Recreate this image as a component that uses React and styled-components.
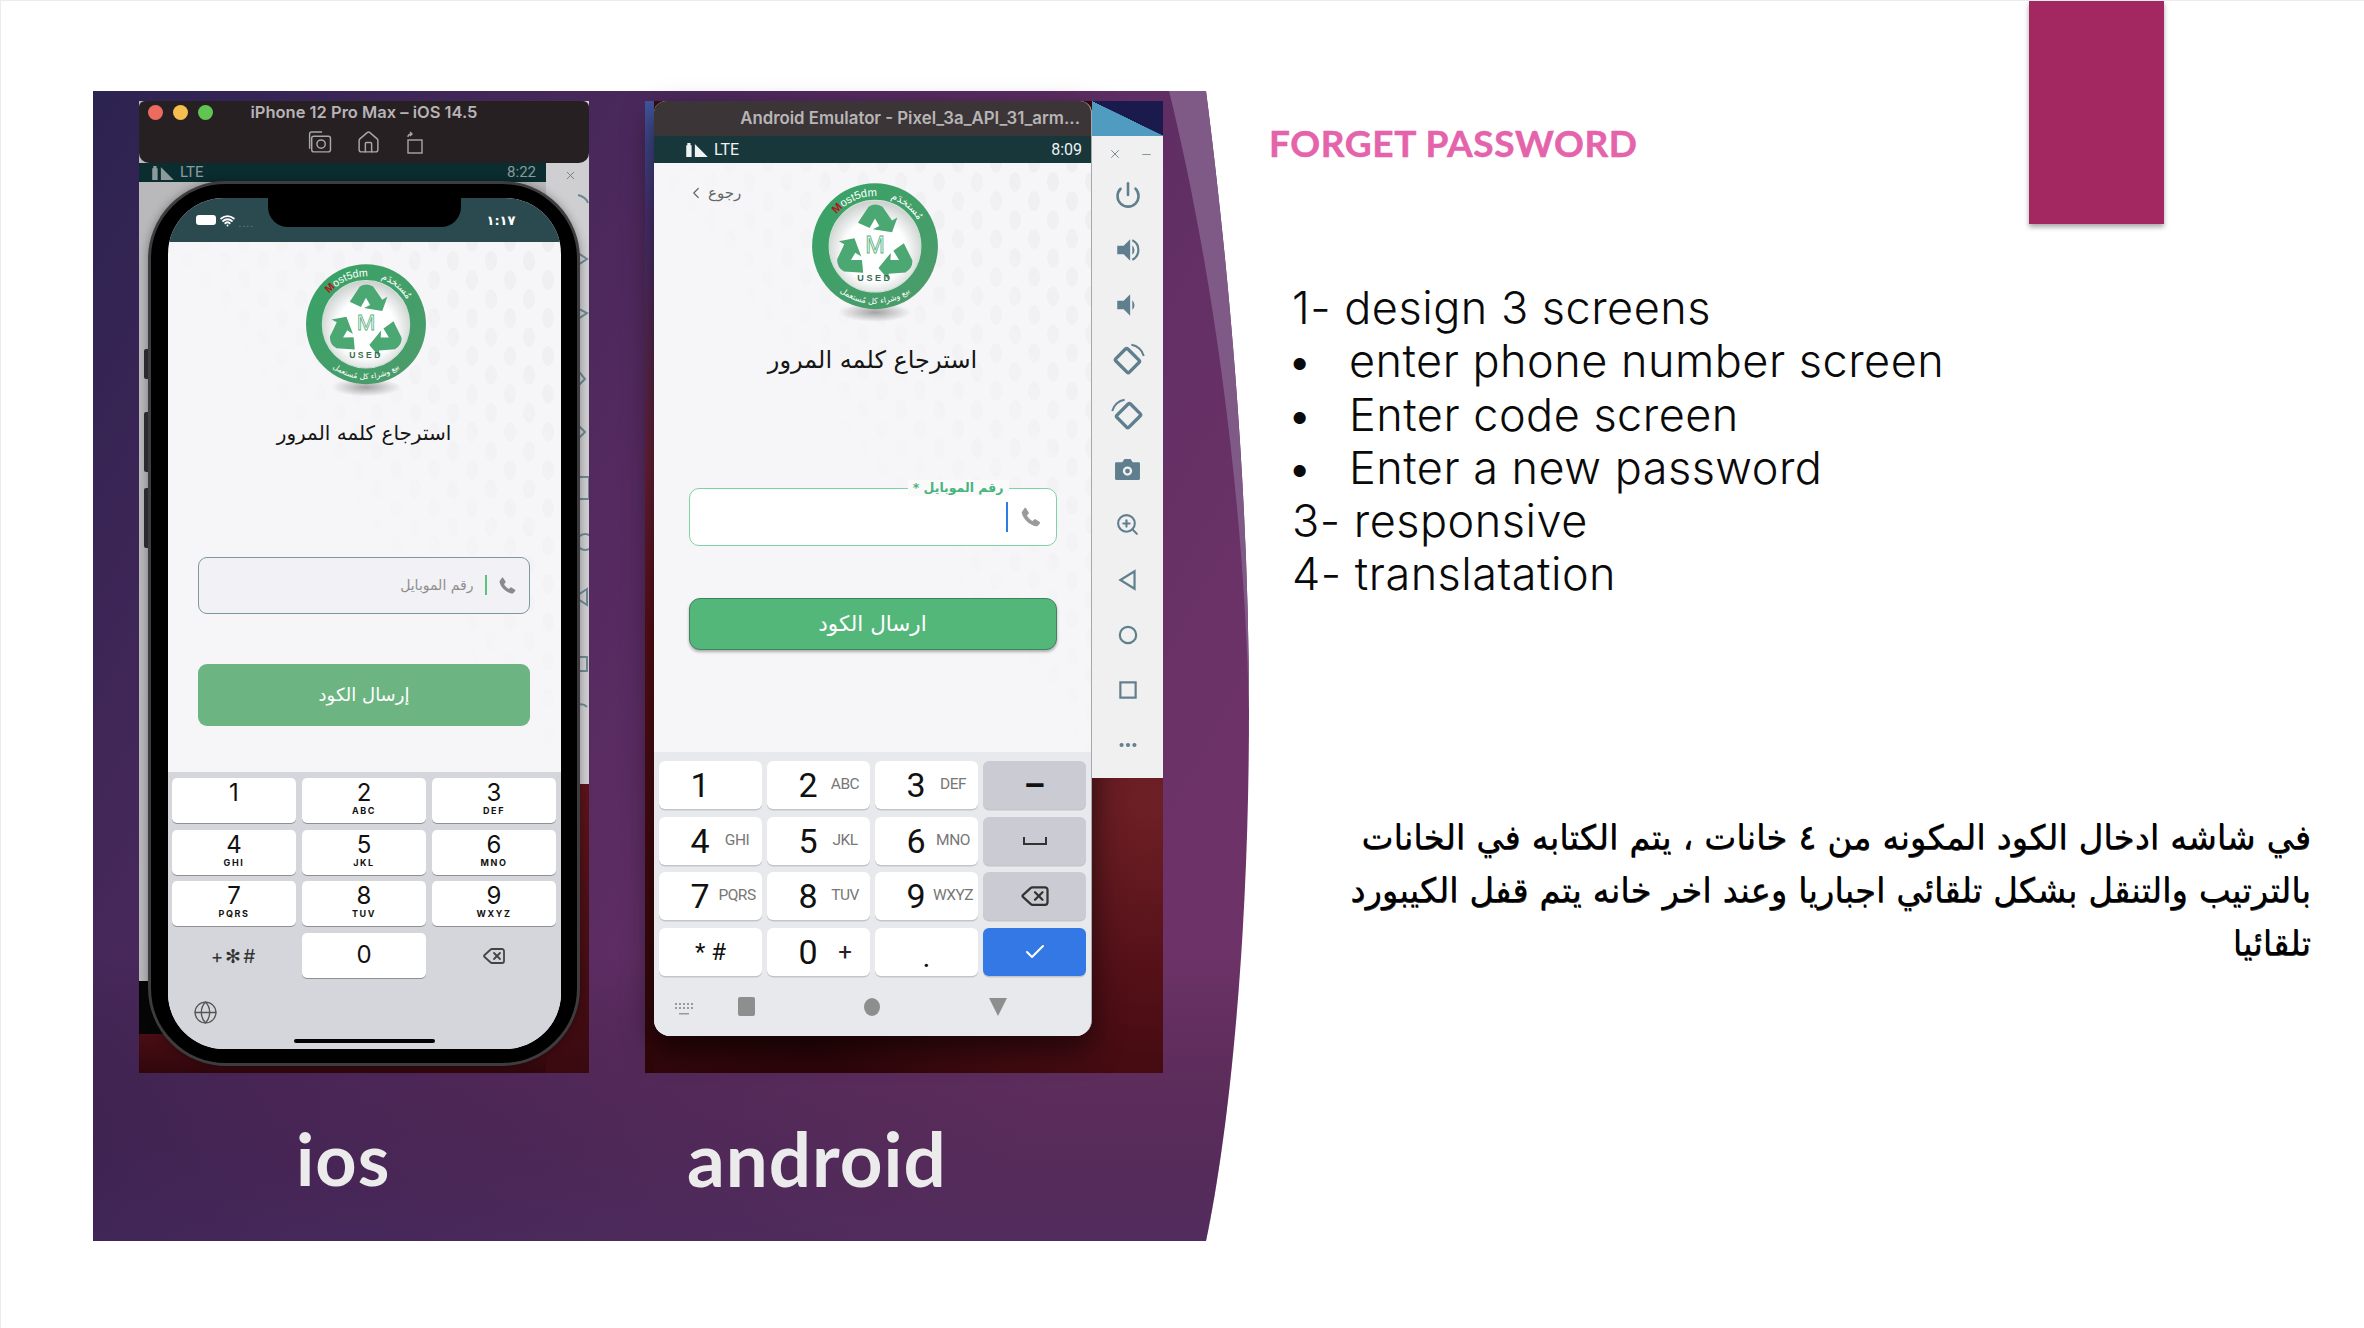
import React from "react";
import styled, { createGlobalStyle } from "styled-components";
import { Power, ZoomIn, ChevronLeft, Check, Delete, Globe, X, Minus, MoreHorizontal, Home, Wifi } from "lucide-react";

const Global = createGlobalStyle`
  html, body { margin: 0; padding: 0; background: #fff; }
  * { box-sizing: border-box; }
`;
const AR = `"DejaVu Sans", "Noto Sans", sans-serif`;

const Slide = styled.div`
  width: 2364px; height: 1328px; background: #fff; overflow: hidden;
  display: grid; grid-template-columns: 1269px 1fr;
  border-top: 1px solid #ececec; border-left: 1px solid #ececec;
  font-family: "Lato", sans-serif;
`;
const Panel = styled.section`
  position: relative; margin: 90px 0 0 92px; height: 1150px; width: 1113px;
`;
const PanelArt = styled.svg`
  position: absolute; left: 0; top: 0; width: 1165px; height: 1150px; overflow: visible;
`;
const Windows = styled.div`
  position: relative; display: flex; gap: 56px; padding: 10px 0 0 46px;
`;
const Captions = styled.div`
  position: relative; display: flex; padding-top: 38px;
`;
const Caption = styled.div`
  font: 700 ${p => p.$size}px/94px "Lato", sans-serif; color: #ecebec; width: ${p => p.$w}px; padding-left: ${p => p.$pad}px;
  letter-spacing: 1px;
`;

/* iOS simulator */
const IosWindow = styled.div`
  position: relative; width: 450px; height: 972px; display: flex; flex-direction: column;
  background:
    linear-gradient(to bottom, #cfcfd1 0 683px, #5a141a 683px, #3a0a10 100%) right top / 43px 100% no-repeat,
    linear-gradient(to bottom, #b9b9bb 0 880px, #060606 880px 933px, #4a0d14 933px, #30070c 100%) left top / 407px 100% no-repeat;
`;
const SimBar = styled.header`
  height: 62px; background: #262023; border-radius: 6px 6px 10px 10px; color: #b7b3b5;
  display: flex; flex-direction: column; align-items: center; position: relative; z-index: 1;
`;
const TrafficLights = styled.div`
  position: absolute; left: 9px; top: 4px; display: flex; gap: 10px;
`;
const Light = styled.i`
  width: 15px; height: 15px; border-radius: 50%; background: ${p => p.$c}; display: block;
`;
const SimTitle = styled.div`
  font: 600 16.5px/18px "Inter", sans-serif; margin-top: 2px; height: 20px;
`;
const SimTools = styled.div`
  display: flex; align-items: center; gap: 23px; margin-top: 7px; color: #a9a6a8;
`;
const Strip = styled.div`
  width: 407px; height: 19px; background: #0b2d30; color: #8d9a9b; display: flex; align-items: center;
  justify-content: space-between; padding: 0 10px 0 11px; font: 400 15px/1 "Roboto", sans-serif;
`;
const SignalGroup = styled.span`
  display: inline-flex; align-items: center; gap: 4px;
`;
const StripX = styled(X)`
  position: absolute; right: 12px; top: 68px; color: #69787c;
`;
const FragmentArt = styled.svg`
  position: absolute; right: 0; top: 66px; width: 14px; height: 620px;
`;
const Phone12 = styled.div`
  position: absolute; left: 9px; top: 80px; width: 432px; height: 885px; border-radius: 78px;
  background: #000; border: 3px solid #3d3d3f; padding: 14px 16.5px; box-shadow: 0 0 10px rgba(0,0,0,.35);
`;
const SideButton = styled.i`
  position: absolute; left: -7px; top: ${p => p.$top}px; height: ${p => p.$h}px; width: 4px;
  background: #2b2b2d; border-radius: 2px 0 0 2px;
`;
const IosScreen = styled.div`
  position: relative; height: 100%; border-radius: 56px; overflow: hidden; background: #f6f6f8;
  display: flex; flex-direction: column;
`;
const IosStatus = styled.div`
  height: 44px; flex: none; background: #2b4a4f; color: #fff; display: flex; align-items: center;
  justify-content: space-between; padding: 0 45px 0 28px; font: 700 13px/1 ${AR}; position: relative;
`;
const Notch = styled.i`
  position: absolute; left: 100px; top: 0; width: 193px; height: 29px; background: #000; border-radius: 0 0 20px 20px;
`;
const BatteryPill = styled.i`
  display: inline-block; width: 20px; height: 10px; background: #fff; border-radius: 3px;
`;
const FaintDots = styled.span`
  color: #6f8a8d; font: 400 10px/1 "Inter", sans-serif; letter-spacing: 1px; margin-top: 5px;
`;
const Dotted = styled.div`
  position: relative; flex: 1; min-height: 0; display: flex; flex-direction: column; align-items: center;
  &::before {
    content: ""; position: absolute; inset: 0; pointer-events: none;
    background:
      radial-gradient(ellipse 6px 10px at center, #eeeef0 95%, transparent 100%) 0 0 / 38px 38px,
      radial-gradient(ellipse 6px 10px at center, #eeeef0 95%, transparent 100%) 19px 19px / 38px 38px;
    -webkit-mask-image: linear-gradient(to bottom left, #000 0, transparent 52%);
    mask-image: linear-gradient(to bottom left, #000 0, transparent 52%);
  }
  & > * { position: relative; }
`;
const LogoWrap = styled.svg`
  display: block; width: ${p => p.$size}px; height: ${p => p.$size * 1.12}px; margin: ${p => p.$top}px 0 0 ${p => p.$shift}px; flex: none;
`;
const ScreenTitle = styled.h1`
  margin: ${p => p.$top}px 0 0; font: 400 ${p => p.$size}px/1.2 ${AR}; color: #161616; direction: rtl;
`;
const IosField = styled.div`
  margin-top: 112px; width: 332px; height: 57px; border: 1.5px solid #7c9a9c; border-radius: 9px; background: #f1f1f6;
  display: flex; direction: rtl; align-items: center; padding: 0 12px; color: #8f8f8f; gap: 9px; font: 400 14px/1 ${AR};
`;
const GreenCaret = styled.i`
  width: 2.5px; height: 20px; background: #5cc27c; margin: 0 2px;
`;
const IosButton = styled.div`
  margin-top: 50px; width: 332px; height: 62px; border-radius: 9px; background: #6cb583; color: #fff;
  font: 400 18px/62px ${AR}; text-align: center; direction: rtl;
`;
const IosKeyboard = styled.div`
  flex: none; height: 277px; background: #d5d6db; padding: 6px 5px 0; position: relative;
  display: grid; grid-template-columns: repeat(3, 124px); grid-auto-rows: 45px; column-gap: 6px; row-gap: 6.5px;
  align-content: start; justify-content: center;
`;
const IosKey = styled.div`
  background: ${p => (p.$plain ? "transparent" : "#fff")}; border-radius: 5px;
  box-shadow: ${p => (p.$plain ? "none" : "0 1px 0 #8f9096")};
  display: flex; flex-direction: column; align-items: center; color: #111;
  font: 400 24px/26px "Inter", sans-serif; padding-top: 2px;
  justify-content: ${p => (p.$plain ? "center" : "flex-start")};
`;
const IosSub = styled.span`
  font: 700 9px/10px "Inter", sans-serif; letter-spacing: 1.6px;
`;
const ZeroGlyph = styled.span`
  margin-top: 7px;
`;
const Symbols = styled.span`
  font: 400 19px/1 "Inter", sans-serif; color: #333; letter-spacing: 2px;
`;
const GlobeSlot = styled(Globe)`
  position: absolute; left: 25px; top: 228px; color: #555;
`;
const HomeBar = styled.i`
  position: absolute; left: 126px; top: 267px; width: 141px; height: 4px; border-radius: 2px; background: #000;
`;

/* Android emulator */
const AndroidWindow = styled.div`
  width: 518px; height: 972px; display: flex; align-items: flex-start;
  background: radial-gradient(circle at 97% 72%, #6e2026 0, #520f16 22%, #2c0509 48%, #3c0a10 100%);
`;
const Gutter = styled.div`
  width: 9px; height: 100%; flex: none;
  background: linear-gradient(to bottom, #3f57a0 0, #4a3273 12%, #6d2138 38%, #5a0f17 55%, #2e0609 100%);
`;
const Emulator = styled.div`
  width: 438px; height: 935px; flex: none; display: flex; flex-direction: column; border-radius: 12px 12px 16px 16px;
  overflow: hidden; background: #f6f6f8; box-shadow: 0 12px 30px rgba(0,0,0,.6); border-right: 1.5px solid #a8a8a8;
`;
const EmuTitle = styled.header`
  height: 35px; flex: none; background: #3b3538; color: #b8b5b6; font: 600 16.8px/35px "Inter", sans-serif;
  text-align: right; padding-right: 11px; white-space: nowrap;
`;
const EmuStatus = styled.div`
  height: 27px; flex: none; background: #17373b; color: #eef2f2; font: 400 16px/1 "Roboto", sans-serif;
  display: flex; align-items: center; justify-content: space-between; padding: 0 9px 0 30px;
`;
const BackLink = styled.div`
  position: absolute; left: 33px; top: 21px; display: flex; align-items: center; gap: 3px; color: #666;
  font: 400 15px/1 ${AR};
`;
const AndroidField = styled.div`
  position: relative; margin-top: 113px; width: 368px; height: 58px; border: 1.5px solid #7fd2a6; border-radius: 10px; background: #fff;
  display: flex; direction: rtl; align-items: center; padding: 0 14px; gap: 12px; color: #999;
`;
const FloatLabel = styled.span`
  position: absolute; right: 47px; top: -9px; background: #fafafa; padding: 0 5px; color: #48b47d;
  font: 700 12.5px/16px ${AR};
`;
const BlueCaret = styled.i`
  width: 2px; height: 30px; background: #2d7ee0;
`;
const AndroidButton = styled.div`
  margin-top: 51.5px; width: 368px; height: 52px; border-radius: 11px; background: #54b77a; border: 1.5px solid #3e8463;
  color: #fff; font: 400 21.5px/50px ${AR}; text-align: center; direction: rtl; box-shadow: 0 2px 3px rgba(0,0,0,.3);
`;
const AndroidKeyboard = styled.div`
  flex: none; height: 284px; background: #e8e9ed; padding: 9px 5px 0;
  display: grid; grid-template-columns: repeat(4, 103px); grid-auto-rows: 48px; gap: 7.5px 5px; align-content: start; position: relative;
`;
const AndroidKey = styled.div`
  background: ${p => (p.$tone === "blue" ? "#3478e5" : p.$tone === "grey" ? "#cbccd3" : "#fff")};
  color: ${p => (p.$tone === "blue" ? "#fff" : "#111")};
  border-radius: 6px; box-shadow: 0 1.5px 0 #c4c5cb; display: flex; align-items: center; justify-content: center;
  font: 400 34px/1 "Roboto", sans-serif;
`;
const DigitGrid = styled.div`
  width: 100%; display: grid; grid-template-columns: 38px 36px; padding-left: 22px; align-items: center; justify-items: center;
`;
const AndroidSub = styled.span`
  font: 400 15.5px/1 "Roboto", sans-serif; color: #777; letter-spacing: -.5px; white-space: nowrap;
`;
const PlusSub = styled.span`
  font: 400 24px/1 "Roboto", sans-serif; color: #222;
`;
const SymbolGlyph = styled.span`
  font-size: 24px;
`;
const PeriodGlyph = styled.span`
  font-size: 30px; line-height: 1; padding-top: 10px;
`;
const NavRow = styled.div`
  grid-column: 1 / -1; display: flex; align-items: center; justify-content: space-between; height: 30px;
  padding: 5px 79px 0 79px; color: #8b8b8b; position: relative; margin-top: 6px;
`;
const TinyKb = styled.svg`
  position: absolute; left: 16px; top: 14px; width: 18px; height: 14px;
`;
const NavSquare = styled.i`
  width: 17px; height: 19px; background: #8e8e8e; border-radius: 2px;
`;
const NavDot = styled.i`
  width: 16px; height: 18px; border-radius: 50%; background: #8e8e8e;
`;
const NavTri = styled.i`
  width: 0; height: 0; border-left: 9px solid transparent; border-right: 9px solid transparent; border-top: 18px solid #8e8e8e;
`;
const SideColumn = styled.div`
  flex: 1; display: flex; flex-direction: column;
`;
const CornerWedge = styled.div`
  height: 35px; background: linear-gradient(26deg, #4f9cc0 50%, #1a1a4c 50.5%);
`;
const SidePanel = styled.div`
  height: 642px; background: #f0f0f0; color: #5f7f8e; display: flex; flex-direction: column; align-items: center;
`;
const WinControls = styled.div`
  height: 36px; width: 100%; display: flex; justify-content: space-between; align-items: center; padding: 0 10px 0 16px;
  color: #6f8894; margin-bottom: -5px;
`;
const ToolSlot = styled.div`
  height: 55px; flex: none; display: flex; align-items: center; justify-content: center; width: 100%;
`;

/* right column */
const Info = styled.section`
  display: flex; flex-direction: column;
`;
const InfoHead = styled.div`
  display: flex; justify-content: space-between; align-items: flex-start; padding-right: 200px;
`;
const Heading = styled.h2`
  margin: 122px 0 0 -1px; font: 700 37px/40px "Lato", sans-serif; color: #e463ab; letter-spacing: .6px;
  -webkit-text-stroke: .5px #e463ab;
`;
const Ribbon = styled.div`
  width: 135px; height: 223px; background: #a32862; box-shadow: 0 3px 5px rgba(0,0,0,.35);
`;
const Points = styled.ul`
  list-style: none; margin: 57px 0 0; padding: 0 0 0 22px;
`;
const Point = styled.li`
  font: 300 45px/53.3px "Inter", sans-serif; letter-spacing: .5px; color: #0a0a0a; display: flex; white-space: nowrap;
`;
const Dot = styled.span`
  width: 62px; margin-left: -5px; flex: none;
`;
const Arabic = styled.div`
  margin-top: 210px; padding-right: 53px; direction: rtl; text-align: right; color: #000;
  font: 400 34px/53px ${AR}; text-shadow: .4px 1px .5px rgba(0,0,0,.75);
`;

function Logo({ size, top, shift }) {
  const id = `l${size}`;
  const arrow = "M44 38 L54 23 Q60 19 67 23 L76 36 L81 33 L76 47 L58 44 L64 41 L60 34 L55 43 Z";
  return (
    <LogoWrap $size={size} $top={top} $shift={shift} viewBox="0 0 120 134">
      <defs>
        <radialGradient id={`${id}s`} cx="50%" cy="50%" r="50%">
          <stop offset="0" stopColor="#888" stopOpacity=".75" /><stop offset="1" stopColor="#888" stopOpacity="0" />
        </radialGradient>
        <linearGradient id={`${id}g`} x1="0" y1="0" x2="1" y2="1">
          <stop offset="0" stopColor="#37a366" /><stop offset="1" stopColor="#4d9b6b" />
        </linearGradient>
        <radialGradient id={`${id}w`} cx="50%" cy="55%" r="55%">
          <stop offset="0.6" stopColor="#ffffff" /><stop offset="1" stopColor="#c9cfcc" />
        </radialGradient>
        <path id={`${id}t`} d="M13 60 A47 47 0 0 1 107 60" />
        <path id={`${id}b`} d="M6 60 A54 54 0 0 0 114 60" />
      </defs>
      <ellipse cx="60" cy="122" rx="34" ry="9" fill={`url(#${id}s)`} />
      <circle cx="60" cy="60" r="59" fill={`url(#${id}g)`} />
      <circle cx="60" cy="60" r="43" fill={`url(#${id}w)`} stroke="#cfe3d7" />
      <g fill="#4ba873">
        <path d={arrow} />
        <path d={arrow} transform="rotate(120 60 60)" />
        <path d={arrow} transform="rotate(240 60 60)" />
      </g>
      <text x="60" y="66" textAnchor="middle" fontFamily="Liberation Sans" fontSize="22" fill="#fff" stroke="#58b083" strokeWidth=".8">M</text>
      <text x="60" y="93" textAnchor="middle" fontFamily="Liberation Sans" fontWeight="700" fontSize="8.5" letterSpacing="2.4" fill="#3a6b52">USED</text>
      <text fontFamily="Liberation Sans" fontSize="10.5" fill="#fff">
        <textPath href={`#${id}t`} startOffset="22%"><tspan fill="#b3141c" fontWeight="700">M</tspan>ost5dm</textPath>
      </text>
      <text fontFamily="DejaVu Sans" fontSize="9.5" fill="#fff">
        <textPath href={`#${id}t`} startOffset="60%">مُستخدَم</textPath>
      </text>
      <text fontFamily="DejaVu Sans" fontSize="7.5" fill="#fff" textAnchor="middle">
        <textPath href={`#${id}b`} startOffset="50%">بيع وشراء كل مُستعمل</textPath>
      </text>
    </LogoWrap>
  );
}

const SignalIcons = ({ color }) => (
  <svg width="26" height="14" viewBox="0 0 24 13">
    <path d="M2 2h1V0h3v2h1v11H2z" fill={color} />
    <path d="M10 13V1l12 12z" fill={color} />
  </svg>
);

const VolumeIcon = ({ loud }) => (
  <svg width="28" height="28" viewBox="0 0 26 26" fill="currentColor">
    <path d="M3 9h6l6-6v20l-6-6H3z" />
    <path d="M17 8.5a6 6 0 0 1 0 9z" />
    {loud && <path d="M17 4a10 10 0 0 1 0 18" fill="none" stroke="currentColor" strokeWidth="2" />}
  </svg>
);
const RotateIcon = ({ flip }) => (
  <svg width="36" height="36" viewBox="0 0 32 32" fill="none" stroke="currentColor" strokeWidth="3" style={{ transform: flip ? "scaleX(-1)" : "none" }}>
    <rect x="7" y="9" width="17" height="15" rx="1.5" transform="rotate(45 15.5 16.5)" />
    <path d="M19 2.5a13 13 0 0 1 11 10" strokeWidth="1.8" />
  </svg>
);
const CameraIcon = () => (
  <svg width="27" height="25" viewBox="0 0 26 24" fill="currentColor">
    <path fillRule="evenodd" d="M2 5h6l2-3h6l2 3h6a1 1 0 0 1 1 1v15a1 1 0 0 1-1 1H2a1 1 0 0 1-1-1V6a1 1 0 0 1 1-1zm11 4a4.5 4.5 0 1 0 0 9 4.5 4.5 0 0 0 0-9zm0 2.2a2.3 2.3 0 1 1 0 4.6 2.3 2.3 0 0 1 0-4.6z" />
  </svg>
);
const OutlineIcon = ({ shape }) => (
  <svg width="24" height="24" viewBox="0 0 22 22" fill="none" stroke="currentColor" strokeWidth="2">
    {shape === "tri" && <path d="M17 3v16L4 11z" />}
    {shape === "circle" && <circle cx="11" cy="11" r="7.5" />}
    {shape === "square" && <rect x="4" y="4" width="14" height="14" />}
  </svg>
);
const FilledPhone = ({ size, color }) => (
  <svg width={size} height={size} viewBox="0 0 24 24" fill={color}>
    <path d="M6.6 2.5 9.5 7c.3.5.2 1.1-.2 1.5L7.6 10.2c1 2.4 3.4 5 6.2 6.2l1.7-1.7c.4-.4 1-.5 1.5-.2l4.5 2.9c.6.4.7 1.2.2 1.7l-2.3 2.4c-.6.6-1.5.8-2.3.6C9.7 20.3 3.7 14.3 2 7.9c-.2-.8 0-1.7.6-2.3L5 2.3c.5-.5 1.2-.4 1.6.2z" />
  </svg>
);
const SpaceBar = () => (
  <svg width="26" height="10" viewBox="0 0 26 10" fill="none" stroke="#333" strokeWidth="2"><path d="M2 1v7h22V1" /></svg>
);
const Backspace = ({ size, color }) => <Delete size={size} color={color} strokeWidth={1.8} />;

const iosKeys = [["1", ""], ["2", "ABC"], ["3", "DEF"], ["4", "GHI"], ["5", "JKL"], ["6", "MNO"], ["7", "PQRS"], ["8", "TUV"], ["9", "WXYZ"]];
const androidRows = [
  [["1", ""], ["2", "ABC"], ["3", "DEF"], ["–", "", "grey"]],
  [["4", "GHI"], ["5", "JKL"], ["6", "MNO"], ["space", "", "grey"]],
  [["7", "PQRS"], ["8", "TUV"], ["9", "WXYZ"], ["del", "", "grey"]],
  [["* #", ""], ["0", "+"], [".", ""], ["ok", "", "blue"]],
];

function AndroidKeyContent({ k, sub }) {
  if (k === "space") return <SpaceBar />;
  if (k === "del") return <Backspace size={30} color="#333" />;
  if (k === "ok") return <Check size={24} color="#fff" strokeWidth={2} />;
  if (k === "* #") return <SymbolGlyph>* #</SymbolGlyph>;
  if (k === ".") return <PeriodGlyph>.</PeriodGlyph>;
  if (k === "–") return <b>–</b>;
  return (
    <DigitGrid>
      <span>{k}</span>
      {sub === "+" ? <PlusSub>+</PlusSub> : sub && <AndroidSub>{sub}</AndroidSub>}
    </DigitGrid>
  );
}

export default function App() {
  return (
    <>
      <Global />
      <Slide>
        <Panel>
          <PanelArt viewBox="0 0 1165 1150">
            <defs>
              <linearGradient id="pg" x1="0" y1="0" x2="1" y2=".55">
                <stop offset="0" stopColor="#2c2350" />
                <stop offset=".5" stopColor="#552a60" />
                <stop offset="1" stopColor="#6d3368" />
              </linearGradient>
              <linearGradient id="pb" x1="0" y1="0" x2="0" y2="1">
                <stop offset="0" stopColor="#000" stopOpacity="0" />
                <stop offset=".75" stopColor="#000" stopOpacity="0" />
                <stop offset="1" stopColor="#2a2350" stopOpacity=".4" />
              </linearGradient>
            </defs>
            <path d="M0 0H1113C1136 180 1156 400 1156 620 1156 850 1136 1040 1113 1150H0Z" fill="url(#pg)" />
            <path d="M0 0H1113C1136 180 1156 400 1156 620 1156 850 1136 1040 1113 1150H0Z" fill="url(#pb)" />
            <path d="M1076 0H1113C1136 180 1156 400 1156 620 1151 400 1118 170 1076 0Z" fill="#7f5a86" />
          </PanelArt>
          <Windows>
            <IosWindow>
              <SimBar>
                <TrafficLights>
                  <Light $c="#ed6a5e" /><Light $c="#f5bf4f" /><Light $c="#61c554" />
                </TrafficLights>
                <SimTitle>iPhone 12 Pro Max – iOS 14.5</SimTitle>
                <SimTools>
                  <svg width="28" height="25" viewBox="0 0 26 24" fill="none" stroke="currentColor" strokeWidth="1.4">
                    <path d="M4 18V4q0-2 2-2h10" /><rect x="6" y="6" width="18" height="15" rx="2" /><circle cx="15" cy="13.5" r="4" />
                  </svg>
                  <Home size={25} strokeWidth={1.4} />
                  <svg width="20" height="24" viewBox="0 0 20 24" fill="none" stroke="currentColor" strokeWidth="1.4">
                    <rect x="4" y="9" width="14" height="13" /><path d="M4 6q0-3 4-3M6 1 8 3 6 5" />
                  </svg>
                </SimTools>
              </SimBar>
              <Strip>
                <SignalGroup><SignalIcons color="#8d9a9b" />LTE</SignalGroup>
                <span>8:22</span>
              </Strip>
              <StripX size={13} strokeWidth={1.6} />
              <FragmentArt viewBox="0 0 14 620" fill="none" stroke="#6f8894" strokeWidth="2">
                <path d="M3 28q8 2 10 8M0 84l12 8-12 8M0 140l12 6-12 8M0 200l10 12-10 10M0 255l10 10-10 10" />
                <rect x="2" y="310" width="12" height="22" />
                <circle cx="10" cy="375" r="8" /><path d="M0 430l12-8v16zM0 490h12v14H0zM0 540a8 8 0 0 1 12 0" />
              </FragmentArt>
              <Phone12>
                <SideButton $top={165} $h={30} />
                <SideButton $top={228} $h={60} />
                <SideButton $top={304} $h={60} />
                <IosScreen>
                  <IosStatus>
                    <Notch />
                    <SignalGroup><BatteryPill /><Wifi size={15} strokeWidth={3} /><FaintDots>....</FaintDots></SignalGroup>
                    <span>١:١٧</span>
                  </IosStatus>
                  <Dotted>
                    <Logo size={122} top={21} shift={3} />
                    <ScreenTitle $size={20} $top={21}>استرجاع كلمه المرور</ScreenTitle>
                    <IosField>
                      <FilledPhone size={19} color="#8a8a8a" />
                      <GreenCaret />
                      <span>رقم الموبايل</span>
                    </IosField>
                    <IosButton>إرسال الكود</IosButton>
                  </Dotted>
                  <IosKeyboard>
                    {iosKeys.map(([n, s]) => (
                      <IosKey key={n}>{n}{s && <IosSub>{s}</IosSub>}</IosKey>
                    ))}
                    <IosKey $plain><Symbols>+✻#</Symbols></IosKey>
                    <IosKey><ZeroGlyph>0</ZeroGlyph></IosKey>
                    <IosKey $plain><Backspace size={24} color="#444" /></IosKey>
                    <GlobeSlot size={25} strokeWidth={1.3} />
                    <HomeBar />
                  </IosKeyboard>
                </IosScreen>
              </Phone12>
            </IosWindow>
            <AndroidWindow>
              <Gutter />
              <Emulator>
                <EmuTitle>Android Emulator - Pixel_3a_API_31_arm...</EmuTitle>
                <EmuStatus>
                  <SignalGroup><SignalIcons color="#eef2f2" />LTE</SignalGroup>
                  <span>8:09</span>
                </EmuStatus>
                <Dotted>
                  <BackLink><ChevronLeft size={18} strokeWidth={1.6} /><span>رجوع</span></BackLink>
                  <Logo size={128} top={19} shift={5} />
                  <ScreenTitle $size={24} $top={21}>استرجاع كلمه المرور</ScreenTitle>
                  <AndroidField>
                    <FloatLabel>رقم الموبايل *</FloatLabel>
                    <FilledPhone size={22} color="#9a9a9a" />
                    <BlueCaret />
                  </AndroidField>
                  <AndroidButton>ارسال الكود</AndroidButton>
                </Dotted>
                <AndroidKeyboard>
                  {androidRows.flat().map(([k, s, t]) => (
                    <AndroidKey key={k} $tone={t}><AndroidKeyContent k={k} sub={s} /></AndroidKey>
                  ))}
                  <NavRow>
                    <TinyKb viewBox="0 0 18 14" fill="#999"><path d="M0 0h2v2H0zM4 0h2v2H4zM8 0h2v2H8zM12 0h2v2h-2zM16 0h2v2h-2zM0 4h2v2H0zM4 4h2v2H4zM8 4h2v2H8zM12 4h2v2h-2zM16 4h2v2h-2zM4 10h10v1.5H4z" /></TinyKb>
                    <NavSquare /><NavDot /><NavTri />
                  </NavRow>
                </AndroidKeyboard>
              </Emulator>
              <SideColumn>
                <CornerWedge />
                <SidePanel>
                  <WinControls><X size={14} strokeWidth={1.6} /><Minus size={13} strokeWidth={1.6} /></WinControls>
                  <ToolSlot><Power size={28} strokeWidth={2.2} /></ToolSlot>
                  <ToolSlot><VolumeIcon loud /></ToolSlot>
                  <ToolSlot><VolumeIcon /></ToolSlot>
                  <ToolSlot><RotateIcon /></ToolSlot>
                  <ToolSlot><RotateIcon flip /></ToolSlot>
                  <ToolSlot><CameraIcon /></ToolSlot>
                  <ToolSlot><ZoomIn size={25} strokeWidth={2} /></ToolSlot>
                  <ToolSlot><OutlineIcon shape="tri" /></ToolSlot>
                  <ToolSlot><OutlineIcon shape="circle" /></ToolSlot>
                  <ToolSlot><OutlineIcon shape="square" /></ToolSlot>
                  <ToolSlot><MoreHorizontal size={22} strokeWidth={2.6} /></ToolSlot>
                </SidePanel>
              </SideColumn>
            </AndroidWindow>
          </Windows>
          <Captions>
            <Caption $w={570} $pad={203} $size={72}>ios</Caption>
            <Caption $w={500} $pad={24} $size={74.5}>android</Caption>
          </Captions>
        </Panel>
        <Info>
          <InfoHead>
            <Heading>FORGET PASSWORD</Heading>
            <Ribbon />
          </InfoHead>
          <Points>
            <Point>1- design 3 screens</Point>
            <Point><Dot>•</Dot>enter phone number screen</Point>
            <Point><Dot>•</Dot>Enter code screen</Point>
            <Point><Dot>•</Dot>Enter a new password</Point>
            <Point>3- responsive</Point>
            <Point>4- translatation</Point>
          </Points>
          <Arabic>
            <div>في شاشه ادخال الكود المكونه من ٤ خانات ، يتم الكتابه في الخانات</div>
            <div>بالترتيب والتنقل بشكل تلقائي اجباريا وعند اخر خانه يتم قفل الكيبورد</div>
            <div>تلقائيا</div>
          </Arabic>
        </Info>
      </Slide>
    </>
  );
}
